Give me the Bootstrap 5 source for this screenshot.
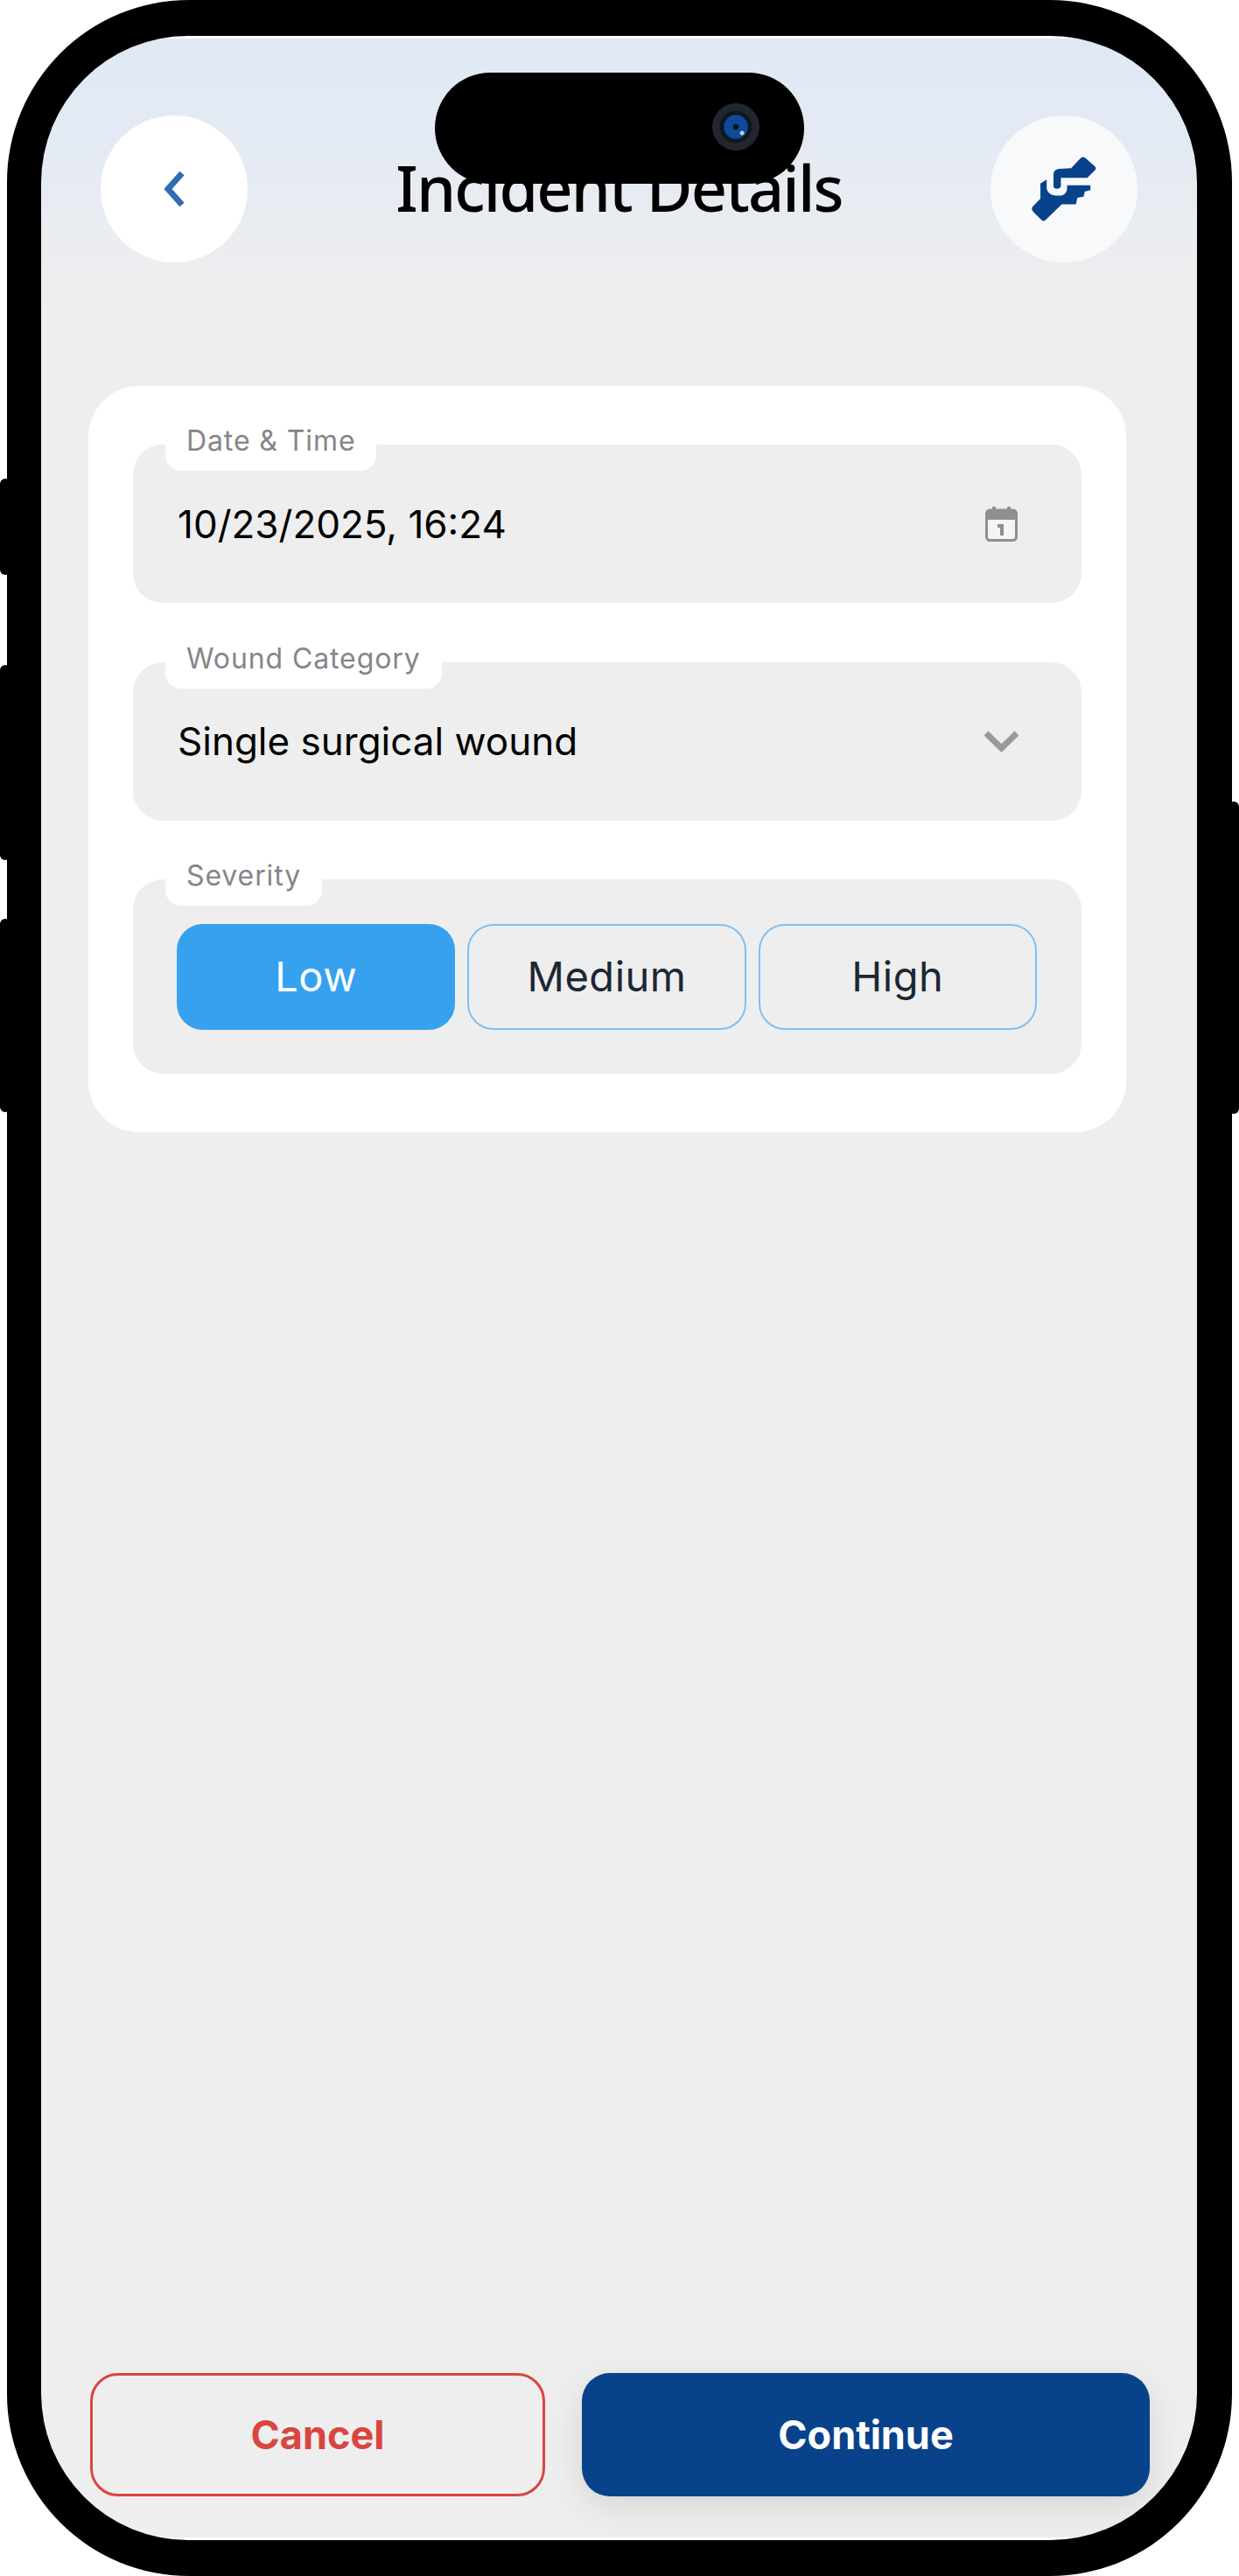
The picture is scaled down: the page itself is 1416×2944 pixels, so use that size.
<!DOCTYPE html>
<html lang="en">
<head>
  <meta charset="UTF-8" />
  <meta name="viewport" content="width=device-width, initial-scale=1.0"/>
  <title>Incident Details</title>
  <link href="https://cdn.jsdelivr.net/npm/bootstrap@5.3.0/dist/css/bootstrap.min.css" rel="stylesheet"/>
  <style>
    body {
      background: #fff;
      font-family: "Inter", "Liberation Sans", sans-serif;
      margin: 0;
    }

    /* phone shell */
    .phone-frame {
      position: relative;
      width: 1400px;
      height: 2944px;
      margin-left: 8px;
      padding: 41px 40px 41px 39px;
      background: #000;
      border-radius: 208px;
    }
    .side-key {
      position: absolute;
      width: 12px;
      background: #000;
      border-radius: 8px;
    }
    .key-a { left: -8px; top: 547px; height: 110px; }
    .key-b { left: -8px; top: 760px; height: 223px; }
    .key-c { left: -8px; top: 1050px; height: 221px; }
    .key-d { right: -8px; top: 916px; height: 357px; }

    .phone-screen {
      position: relative;
      height: 100%;
      overflow: hidden;
      border-radius: 168px;
      background: linear-gradient(#fff 0, #fff 3px, #dfe9f4 3px, #e4eaf4 120px, #eeeeee 300px, #eeeeee 2859px, #fff 2859px);
    }
    .island {
      position: absolute;
      top: 42px;
      left: 450px;
      width: 422px;
      height: 127px;
      background: #000;
      border-radius: 64px;
    }
    .island-cam {
      position: absolute;
      top: 35px;
      right: 51px;
      width: 54px;
      height: 54px;
      border-radius: 50%;
      background:
        radial-gradient(circle at 63% 63%, #ccc 0 2px, transparent 3px),
        radial-gradient(circle at 50% 50%, #0a1420 0 8%, #0f4a9a 10% 34%, #0d1620 38% 46%, #22272d 50% 100%);
    }

    /* header */
    .top-bar {
      padding: 91px 68px 0;
    }
    .round-btn {
      width: 168px;
      height: 168px;
      flex: none;
    }
    .round-back { background: #fff; }
    .round-help { background: #f7f9fb; }
    .page-title {
      margin: 0 0 4px;
      font-family: "Noto Sans", sans-serif;
      font-size: 72px;
      font-weight: 500;
      letter-spacing: -1.8px;
      line-height: 1;
      color: #000;
    }

    /* form card */
    .form-panel {
      margin: 141px 81px 0 54px;
      padding: 67px 51px;
      gap: 67.5px;
      background: #fff;
      border-radius: 58px;
    }
    .form-field {
      position: relative;
      height: 181px;
      padding: 0 70px 0 51px;
      background: #eee;
      border-radius: 34px;
    }
    .field-severity {
      height: 222px;
      padding: 51px 51px 50px 50px;
      gap: 14px;
    }
    .field-label {
      position: absolute;
      top: -34px;
      left: 37px;
      height: 64px;
      padding: 0 24px;
      background: #fff;
      border-radius: 0 0 18px 18px;
      font-size: 32px;
      letter-spacing: 0.9px;
      line-height: 59px;
      color: #85858b;
    }
    .field-value {
      font-size: 44px;
      color: #000;
    }
    .cal-icon { margin-right: 3px; }

    .level-btn {
      flex: 1 1 0;
      height: 121px;
      padding: 0;
      border: 2px solid #80bff2;
      border-radius: 30px;
      background: transparent;
      font-family: "Inter", sans-serif;
      font-size: 47px;
      font-weight: 400;
      letter-spacing: 0.5px;
      color: #1c2733;
    }
    .level-on {
      background: #36a2ef;
      border-color: #36a2ef;
      color: #fff;
    }

    /* bottom actions */
    .action-bar {
      padding: 0 54px 50px 56px;
      gap: 42px;
    }
    .action-btn {
      height: 141px;
      padding: 0;
      border-radius: 32px;
      font-size: 45px;
      font-weight: 700;
    }
    .action-cancel {
      width: 520px;
      background: transparent;
      border: 3px solid #d9463f;
      color: #d9463f;
    }
    .action-continue {
      width: 649px;
      background: #08428a;
      border: 0;
      color: #fff;
      box-shadow: 0 12px 40px rgba(0, 0, 0, 0.1);
    }
  </style>
</head>
<body>
  <div class="phone-frame">
    <div class="side-key key-a"></div>
    <div class="side-key key-b"></div>
    <div class="side-key key-c"></div>
    <div class="side-key key-d"></div>

    <div class="phone-screen d-flex flex-column">
      <div class="top-bar d-flex justify-content-between align-items-center">
        <div class="round-btn round-back rounded-circle d-flex align-items-center justify-content-center">
          <svg width="26" height="42" viewBox="0 0 26 42"><path d="M22 3 6 21l16 18" fill="none" stroke="#2f6cb3" stroke-width="7"/></svg>
        </div>
        <h1 class="page-title">Incident Details</h1>
        <div class="round-btn round-help rounded-circle d-flex align-items-center justify-content-center">
          <!-- hand over hand, traced from the reference -->
          <svg width="76" height="78" viewBox="176 174 234 234" fill="#08428a">
            <path d="M256 240Q256 222 275 220L318 218 352 182Q360 175 368 182L402 212Q408 218 402 225L375 252H282V280Q280 290 268 290 256 290 256 280Z"/>
            <path d="M232 258V290Q238 312 262 314H285Q302 308 304 290V278H386V295L366 300 362 318 340 322 335 345H285L228 400Q222 406 214 400L184 370Q176 360 184 352L210 325V272Z"/>
          </svg>
        </div>
      </div>

      <div class="form-panel d-flex flex-column">
        <div class="form-field d-flex align-items-center justify-content-between">
          <span class="field-label">Date &amp; Time</span>
          <span class="field-value">10/23/2025, 16:24</span>
          <svg class="cal-icon" width="37" height="40" viewBox="0 0 37 40">
            <rect x="1.5" y="4" width="34" height="34.5" rx="4" fill="#f4f4f4" stroke="#8e8e93" stroke-width="3"/>
            <path d="M2 6q0-3 3-3h27q3 0 3 3v9H2z" fill="#8e8e93"/>
            <rect x="8" y="0" width="4" height="6" rx="1" fill="#8e8e93"/>
            <rect x="25" y="0" width="4" height="6" rx="1" fill="#8e8e93"/>
            <path d="M14 20h7v13h-4v-9h-3z" fill="#8e8e93"/>
          </svg>
        </div>

        <div class="form-field d-flex align-items-center justify-content-between">
          <span class="field-label">Wound Category</span>
          <span class="field-value">Single surgical wound</span>
          <svg width="43" height="26" viewBox="0 0 43 26"><path d="M4 4l17.5 17L39 4" fill="none" stroke="#999" stroke-width="7"/></svg>
        </div>

        <div class="form-field field-severity d-flex">
          <span class="field-label">Severity</span>
          <button type="button" class="btn level-btn level-on">Low</button>
          <button type="button" class="btn level-btn">Medium</button>
          <button type="button" class="btn level-btn">High</button>
        </div>
      </div>

      <div class="action-bar d-flex mt-auto">
        <button type="button" class="btn action-btn action-cancel">Cancel</button>
        <button type="button" class="btn action-btn action-continue">Continue</button>
      </div>

      <div class="island"><div class="island-cam"></div></div>
    </div>
  </div>

  <script src="https://cdn.jsdelivr.net/npm/bootstrap@5.3.0/dist/js/bootstrap.bundle.min.js"></script>
</body>
</html>
